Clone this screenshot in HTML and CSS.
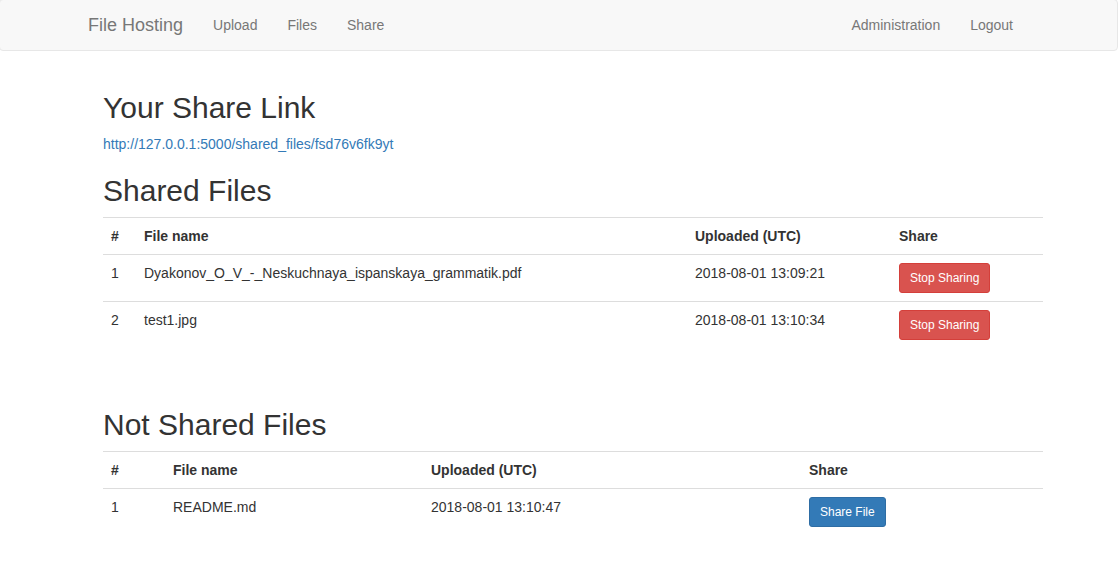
FILE: index.html
```html
<!DOCTYPE html>
<html>
<head>
<meta charset="utf-8">
<title>File Hosting</title>
<link rel="stylesheet" href="styles.css">
</head>
<body>
<nav class="navbar">
  <div class="nav-inner">
    <a class="brand" href="#">File Hosting</a>
    <a class="nav-link" href="#">Upload</a>
    <a class="nav-link" href="#">Files</a>
    <a class="nav-link" href="#">Share</a>
    <div class="nav-spacer"></div>
    <a class="nav-link" href="#">Administration</a>
    <a class="nav-link" href="#">Logout</a>
  </div>
</nav>
<main class="content">
  <h2>Your Share Link</h2>
  <p class="share-link"><a href="#">http://127.0.0.1:5000/shared_files/fsd76v6fk9yt</a></p>
  <h2>Shared Files</h2>
  <table class="table shared">
    <colgroup>
      <col class="c1"><col class="c2"><col class="c3"><col class="c4">
    </colgroup>
    <tbody>
      <tr><th>#</th><th>File name</th><th>Uploaded (UTC)</th><th>Share</th></tr>
      <tr><td>1</td><td>Dyakonov_O_V_-_Neskuchnaya_ispanskaya_grammatik.pdf</td><td>2018-08-01 13:09:21</td><td><button class="btn btn-danger">Stop Sharing</button></td></tr>
      <tr><td>2</td><td>test1.jpg</td><td>2018-08-01 13:10:34</td><td><button class="btn btn-danger">Stop Sharing</button></td></tr>
    </tbody>
  </table>
  <div class="spacer"></div>
  <h2>Not Shared Files</h2>
  <table class="table notshared">
    <colgroup>
      <col class="c1"><col class="c2"><col class="c3"><col class="c4">
    </colgroup>
    <tbody>
      <tr><th>#</th><th>File name</th><th>Uploaded (UTC)</th><th>Share</th></tr>
      <tr><td>1</td><td>README.md</td><td>2018-08-01 13:10:47</td><td><button class="btn btn-primary">Share File</button></td></tr>
    </tbody>
  </table>
</main>
</body>
</html>
```
FILE: styles.css
```css
* { box-sizing: border-box; }
html, body { margin: 0; padding: 0; background: #fff; }
body {
  font-family: "Liberation Sans", Arial, Helvetica, sans-serif;
  font-size: 14px;
  line-height: 20px;
  color: #333;
}
a { text-decoration: none; }

.navbar {
  height: 52px;
  background: #f8f8f8;
  border: 1px solid #e7e7e7;
  border-radius: 4px;
  margin: -1px 0 20px -1px;
}
.nav-inner {
  display: flex;
  align-items: stretch;
  height: 50px;
  padding: 0 89px 0 73px;
}
.brand {
  font-size: 18px;
  line-height: 20px;
  padding: 15px;
  color: #777;
}
.nav-link {
  padding: 15px;
  line-height: 20px;
  color: #777;
}
.nav-spacer { flex: 1; }

.content {
  display: flow-root;
  width: 940px;
  margin-left: 103px;
}
h2 {
  font-family: inherit;
  font-weight: 500;
  font-size: 30px;
  line-height: 1.1;
  margin: 20px 0 10px;
  color: #333;
}
p { margin: 0 0 10px; }
.share-link a { color: #337ab7; }

.table {
  width: 940px;
  border-collapse: collapse;
  border-spacing: 0;
  margin-bottom: 20px;
  table-layout: fixed;
}
.table th, .table td {
  padding: 8px;
  line-height: 20px;
  text-align: left;
  vertical-align: top;
  border-top: 1px solid #ddd;
}
.table th { font-weight: bold; }

.shared .c1 { width: 33px; }
.shared .c2 { width: 551px; }
.shared .c3 { width: 204px; }
.shared .c4 { width: 152px; }
.notshared .c1 { width: 62px; }
.notshared .c2 { width: 258px; }
.notshared .c3 { width: 378px; }
.notshared .c4 { width: 242px; }

.spacer { height: 20px; }

.btn {
  display: inline-block;
  font-family: inherit;
  font-size: 12px;
  line-height: 1.5;
  padding: 5px 10px;
  border-radius: 3px;
  border: 1px solid transparent;
  color: #fff;
  cursor: pointer;
  height: 30px;
}
.btn-danger { background: #d9534f; border-color: #d43f3a; }
.btn-primary { background: #337ab7; border-color: #2e6da4; }
```
